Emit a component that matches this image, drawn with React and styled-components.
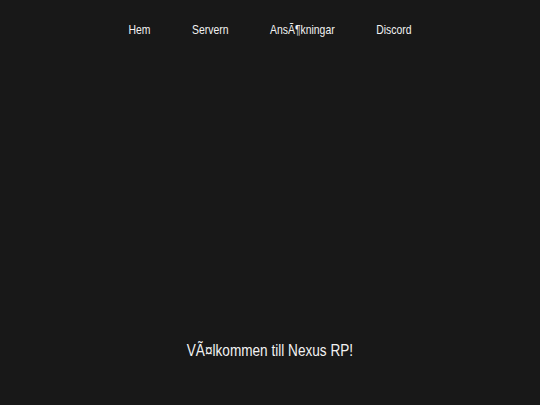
import React from "react";
import styled, { createGlobalStyle } from "styled-components";

const GlobalStyle = createGlobalStyle`
  html, body, #root {
    margin: 0;
    padding: 0;
    height: 100%;
  }
  body {
    background: #181818;
    color: #ffffff;
    font-family: "Liberation Sans", Arial, sans-serif;
  }
`;

const Page = styled.div`
  height: 100%;
  display: flex;
  flex-direction: column;
`;

/* the lettering in the picture is condensed, so the row is squeezed */
const Nav = styled.nav`
  display: flex;
  justify-content: center;
  gap: 52px;
  padding-top: 22px;
  transform: scaleX(0.8);
  transform-origin: center;
`;

const NavLink = styled.a`
  color: #f2f2f2;
  font-size: 13px;
  line-height: 16px;
  text-decoration: none;
`;

const Hero = styled.main`
  flex: 1;
  display: flex;
  align-items: flex-end;
  justify-content: center;
  padding-bottom: 44px;
`;

const Title = styled.h1`
  margin: 0;
  font-size: 17px;
  font-weight: normal;
  line-height: 20px;
  color: #f2f2f2;
  transform: scaleX(0.8);
`;

const links = ["Hem", "Servern", "AnsÃ¶kningar", "Discord"];

export default function App() {
  return (
    <>
      <GlobalStyle />
      <Page>
        <Nav>
          {links.map((l) => (
            <NavLink key={l} href="#">
              {l}
            </NavLink>
          ))}
        </Nav>
        <Hero>
          <Title>VÃ¤lkommen till Nexus RP!</Title>
        </Hero>
      </Page>
    </>
  );
}
